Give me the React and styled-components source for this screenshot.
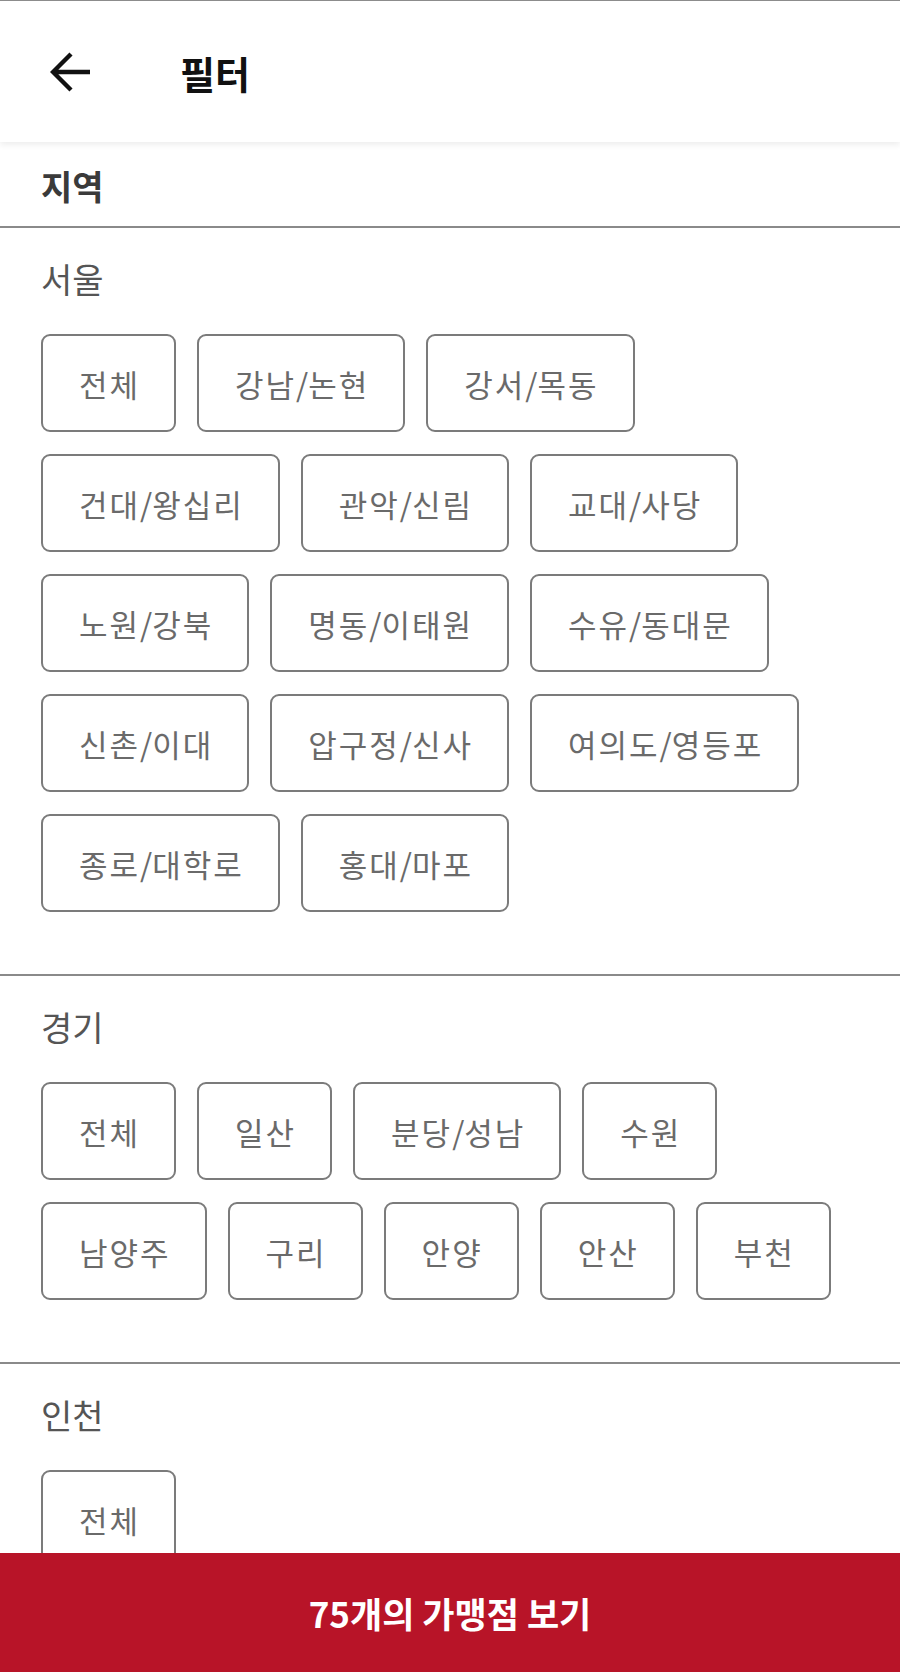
import React from "react";
import styled, { createGlobalStyle } from "styled-components";

const GlobalStyle = createGlobalStyle`
    * {
        box-sizing: border-box;
    }
    body {
        margin: 0;
        background: #ffffff;
        font-family: "Noto Sans CJK KR", "Noto Sans", sans-serif;
    }
`;

const Page = styled.div`
    height: 100vh;
    display: flex;
    flex-direction: column;
    overflow: hidden;
    background: #ffffff;
`;

const Header = styled.header`
    position: relative;
    z-index: 2;
    height: 142px;
    flex-shrink: 0;
    display: flex;
    align-items: center;
    padding-left: 49px;
    border-top: 1px solid #8c8c8c;
    background: #ffffff;
    box-shadow: 0 3px 6px rgba(0, 0, 0, 0.07);
`;

const BackButton = styled.button`
    width: 44px;
    height: 44px;
    padding: 0;
    border: none;
    background: none;
    display: flex;
    align-items: center;
    justify-content: center;
    margin-right: 87px;
    cursor: pointer;
`;

const Title = styled.h1`
    margin: 0;
    font-size: 38px;
    font-weight: 700;
    color: #111111;
    line-height: 1;
    padding-top: 2px;
`;

const Scroll = styled.main`
    flex: 1;
    overflow: hidden;
`;

const GroupHeading = styled.div`
    height: 86px;
    display: flex;
    align-items: center;
    padding: 2px 41px 0;
    font-size: 34px;
    font-weight: 700;
    color: #3a3a3a;
    border-bottom: 2px solid #8a8a8a;
`;

const Section = styled.section`
    padding: 29px 41px 62px;
    border-bottom: 2px solid #8a8a8a;
`;

const SectionTitle = styled.h2`
    margin: 0 0 33px;
    font-size: 34px;
    line-height: 44px;
    font-weight: 400;
    color: #555555;
`;

const Chips = styled.div`
    display: flex;
    flex-wrap: wrap;
    gap: 22px 21px;
`;

const Chip = styled.button`
    height: 98px;
    padding: 0 34px 0 36px;
    border: 2px solid #7b7b7b;
    border-radius: 9px;
    background: ${(props) => (props.$active ? "#fdf1f2" : "#ffffff")};
    font-family: inherit;
    font-size: 31px;
    letter-spacing: 2px;
    color: #6a6a6a;
    cursor: pointer;
    white-space: nowrap;
`;

const Slash = styled.span`
    letter-spacing: 0;
`;

const BottomBar = styled.button`
    height: 119px;
    flex-shrink: 0;
    width: 100%;
    border: none;
    background: #b81428;
    color: #ffffff;
    font-family: inherit;
    font-size: 35px;
    font-weight: 700;
    cursor: pointer;
`;

const regions = [
    {
        name: "서울",
        areas: [
            "전체",
            "강남/논현",
            "강서/목동",
            "건대/왕십리",
            "관악/신림",
            "교대/사당",
            "노원/강북",
            "명동/이태원",
            "수유/동대문",
            "신촌/이대",
            "압구정/신사",
            "여의도/영등포",
            "종로/대학로",
            "홍대/마포",
        ],
    },
    {
        name: "경기",
        areas: ["전체", "일산", "분당/성남", "수원", "남양주", "구리", "안양", "안산", "부천"],
    },
    {
        name: "인천",
        areas: ["전체"],
    },
];

const BackArrow = () => (
    <svg width="42" height="42" viewBox="0 0 42 42" fill="none">
        <path
            d="M40 21H4M21 3L3 21l18 18"
            stroke="#111111"
            strokeWidth="4.4"
            strokeLinecap="butt"
            strokeLinejoin="miter"
        />
    </svg>
);

// "강남/논현" -> 강남 <Slash>/</Slash> 논현
const AreaLabel = ({ text }) => {
    const parts = text.split("/");
    return parts.map((part, i) => (
        <React.Fragment key={i}>
            {i > 0 && <Slash>/</Slash>}
            {part}
        </React.Fragment>
    ));
};

const App = () => {
    return (
        <Page>
            <GlobalStyle />
            <Header>
                <BackButton aria-label="뒤로">
                    <BackArrow />
                </BackButton>
                <Title>필터</Title>
            </Header>

            <Scroll>
                <GroupHeading>지역</GroupHeading>
                {regions.map((region) => (
                    <Section key={region.name}>
                        <SectionTitle>{region.name}</SectionTitle>
                        <Chips>
                            {region.areas.map((area) => (
                                <Chip key={area}>
                                    <AreaLabel text={area} />
                                </Chip>
                            ))}
                        </Chips>
                    </Section>
                ))}
            </Scroll>

            <BottomBar>75개의 가맹점 보기</BottomBar>
        </Page>
    );
};

export default App;
